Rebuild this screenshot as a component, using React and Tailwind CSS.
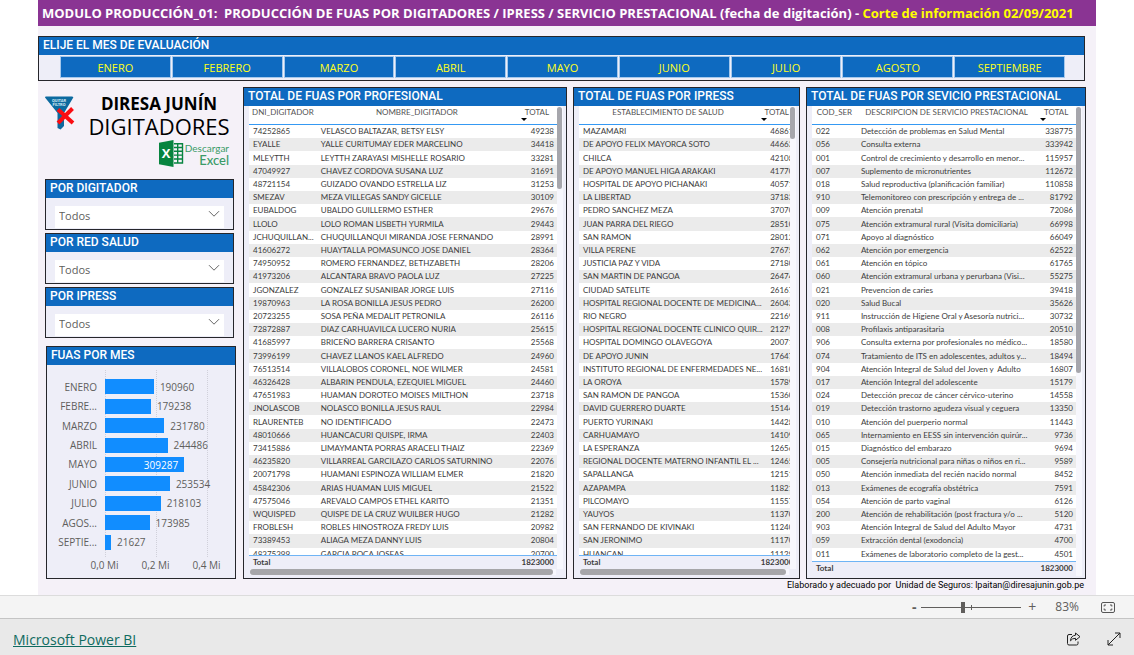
import React, { useState } from 'react'
import clsx from 'clsx'

const months = ['ENERO', 'FEBRERO', 'MARZO', 'ABRIL', 'MAYO', 'JUNIO', 'JULIO', 'AGOSTO', 'SEPTIEMBRE']

const monthTotals = [
  { label: 'ENERO', value: 190960 },
  { label: 'FEBRE...', value: 179238 },
  { label: 'MARZO', value: 231780 },
  { label: 'ABRIL', value: 244486 },
  { label: 'MAYO', value: 309287 },
  { label: 'JUNIO', value: 253534 },
  { label: 'JULIO', value: 218103 },
  { label: 'AGOS...', value: 173985 },
  { label: 'SEPTIE...', value: 21627 },
]

const CHART_MAX = 500000

const professionals = [
  ['74252865', 'VELASCO BALTAZAR, BETSY ELSY', 49238],
  ['EYALLE', 'YALLE CURITUMAY EDER MARCELINO', 34418],
  ['MLEYTTH', 'LEYTTH ZARAYASI MISHELLE ROSARIO', 33281],
  ['47049927', 'CHAVEZ CORDOVA SUSANA LUZ', 31691],
  ['48721154', 'GUIZADO OVANDO ESTRELLA LIZ', 31253],
  ['SMEZAV', 'MEZA VILLEGAS SANDY GICELLE', 30109],
  ['EUBALDOG', 'UBALDO GUILLERMO ESTHER', 29676],
  ['LLOLO', 'LOLO ROMAN LISBETH YURMILA', 29443],
  ['JCHUQUILLAN...', 'CHUQUILLANQUI MIRANDA JOSE FERNANDO', 28991],
  ['41606272', 'HUAYTALLA POMASUNCO JOSE DANIEL', 28364],
  ['74950952', 'ROMERO FERNANDEZ, BETHZABETH', 28206],
  ['41973206', 'ALCANTARA BRAVO PAOLA LUZ', 27225],
  ['JGONZALEZ', 'GONZALEZ SUSANIBAR JORGE LUIS', 27116],
  ['19870963', 'LA ROSA BONILLA JESUS PEDRO', 26200],
  ['20723255', 'SOSA PEÑA MEDALIT PETRONILA', 26116],
  ['72872887', 'DIAZ CARHUAVILCA LUCERO NURIA', 25615],
  ['41685997', 'BRICEÑO BARRERA CRISANTO', 25568],
  ['73996199', 'CHAVEZ LLANOS KAEL ALFREDO', 24960],
  ['76513514', 'VILLALOBOS CORONEL, NOE WILMER', 24581],
  ['46326428', 'ALBARIN PENDULA, EZEQUIEL MIGUEL', 24460],
  ['47651983', 'HUAMAN DOROTEO MOISES MILTHON', 23718],
  ['JNOLASCOB', 'NOLASCO BONILLA JESUS RAUL', 22984],
  ['RLAURENTEB', 'NO IDENTIFICADO', 22473],
  ['48010666', 'HUANCACURI QUISPE, IRMA', 22403],
  ['73415886', 'LIMAYMANTA PORRAS ARACELI THAIZ', 22369],
  ['46235820', 'VILLARREAL GARCILAZO CARLOS SATURNINO', 22076],
  ['20071798', 'HUAMANI ESPINOZA WILLIAM ELMER', 21820],
  ['45842306', 'ARIAS HUAMAN LUIS MIGUEL', 21522],
  ['47575046', 'AREVALO CAMPOS ETHEL KARITO', 21351],
  ['WQUISPED', 'QUISPE DE LA CRUZ WUILBER HUGO', 21282],
  ['FROBLESH', 'ROBLES HINOSTROZA FREDY LUIS', 20982],
  ['73389453', 'ALIAGA MEZA DANNY LUIS', 20804],
  ['48375399', 'GARCIA ROCA JOSEAS', 20700],
]

const facilities = [
  ['MAZAMARI', 46861],
  ['DE APOYO FELIX MAYORCA SOTO', 44663],
  ['CHILCA', 42108],
  ['DE APOYO MANUEL HIGA ARAKAKI', 41770],
  ['HOSPITAL DE APOYO PICHANAKI', 40571],
  ['LA LIBERTAD', 37183],
  ['PEDRO SANCHEZ MEZA', 37070],
  ['JUAN PARRA DEL RIEGO', 28510],
  ['SAN RAMON', 28012],
  ['VILLA PERENE', 27675],
  ['JUSTICIA PAZ Y VIDA', 27180],
  ['SAN MARTIN DE PANGOA', 26474],
  ['CIUDAD SATELITE', 26167],
  ['HOSPITAL REGIONAL DOCENTE DE MEDICINA...', 26043],
  ['RIO NEGRO', 22169],
  ['HOSPITAL REGIONAL DOCENTE CLINICO QUIR...', 21279],
  ['HOSPITAL DOMINGO OLAVEGOYA', 20071],
  ['DE APOYO JUNIN', 17647],
  ['INSTITUTO REGIONAL DE ENFERMEDADES NE...', 16810],
  ['LA OROYA', 15789],
  ['SAN RAMON DE PANGOA', 15360],
  ['DAVID GUERRERO DUARTE', 15144],
  ['PUERTO YURINAKI', 14428],
  ['CARHUAMAYO', 14109],
  ['LA ESPERANZA', 12656],
  ['REGIONAL DOCENTE MATERNO INFANTIL EL ...', 12465],
  ['SAPALLANGA', 12151],
  ['AZAPAMPA', 11821],
  ['PILCOMAYO', 11557],
  ['YAUYOS', 11370],
  ['SAN FERNANDO DE KIVINAKI', 11240],
  ['SAN JERONIMO', 11170],
  ['HUANCAN', 11129],
]

const services = [
  ['022', 'Detección de problemas en Salud Mental', 338775],
  ['056', 'Consulta externa', 333942],
  ['001', 'Control de crecimiento y desarrollo en menor...', 115957],
  ['007', 'Suplemento de micronutrientes', 112672],
  ['018', 'Salud reproductiva (planificación familiar)', 110858],
  ['910', 'Telemonitoreo con prescripción y entrega de ...', 81792],
  ['009', 'Atención prenatal', 72086],
  ['075', 'Atención extramural rural (Visita domiciliaria)', 66998],
  ['071', 'Apoyo al diagnóstico', 66049],
  ['062', 'Atención por emergencia', 62522],
  ['061', 'Atención en tópico', 61765],
  ['060', 'Atención extramural urbana y perurbana (Visi...', 55275],
  ['021', 'Prevencion de caries', 39418],
  ['020', 'Salud Bucal', 35626],
  ['911', 'Instrucción de Higiene Oral y Asesoría nutrici...', 30732],
  ['008', 'Profilaxis antiparasitaria', 20510],
  ['906', 'Consulta externa por profesionales no médico...', 18580],
  ['074', 'Tratamiento de ITS en adolescentes, adultos y...', 18494],
  ['904', 'Atención Integral de Salud del Joven y  Adulto', 16807],
  ['017', 'Atención Integral del adolescente', 15179],
  ['024', 'Detección precoz de cáncer cérvico-uterino', 14558],
  ['019', 'Detección trastorno agudeza visual y ceguera', 13350],
  ['010', 'Atención del puerperio normal', 11443],
  ['065', 'Internamiento en EESS sin intervención quirúr...', 9736],
  ['015', 'Diagnóstico del embarazo', 9694],
  ['005', 'Consejería nutricional para niñas o niños en ri...', 9589],
  ['050', 'Atención inmediata del recién nacido normal', 8452],
  ['013', 'Exámenes de ecografía obstétrica', 7591],
  ['054', 'Atención de parto vaginal', 6126],
  ['200', 'Atención de rehabilitación (post fractura y/o ...', 5120],
  ['903', 'Atención Integral de Salud del Adulto Mayor', 4731],
  ['059', 'Extracción dental (exodoncia)', 4700],
  ['011', 'Exámenes de laboratorio completo de la gest...', 4501],
]

const Panel = ({ title, className, children }) => (
  <section className={clsx('flex flex-col border border-[#26262b] bg-[#eeeef8]', className)}>
    <h2 className="h-[18px] shrink-0 bg-[#0e6ac0] pl-1 font-['Roboto'] text-[12px] font-medium leading-4 text-white whitespace-nowrap">
      {title}
    </h2>
    {children}
  </section>
)

const Slicer = ({ id, title }) => (
  <Panel title={title} className="h-[51px]">
    <div className="relative mx-[9px] mt-1">
      <select
        id={id}
        aria-label={title}
        className="h-[22px] w-full appearance-none bg-white pb-px pl-1 text-[11px] text-[#605e5c] outline-none"
      >
        <option>Todos</option>
      </select>
      <svg className="pointer-events-none absolute right-1 top-1.5 h-3 w-3" viewBox="0 0 12 12" fill="none" stroke="#666">
        <path d="M1 3.2 6 8.2 11 3.2" />
      </svg>
    </div>
  </Panel>
)

const DataTable = ({ columns, rows, widths, wide, hScroll, thumb }) => (
  <>
    <div className="flex pl-[5px] pr-[3px]">
      <div className={clsx('min-w-0 flex-1 overflow-hidden', hScroll ? 'h-[463px]' : 'h-[470px]')}>
        <table
          className={clsx(
            "h-[469px] table-fixed border-separate border-spacing-0 text-[8px] leading-[11px] text-[#3c3c3c] whitespace-pre font-['Lato']",
            wide ? 'w-[103%]' : 'w-full'
          )}
        >
          <colgroup>
            {widths.map((w, i) => (
              <col key={i} className={w} />
            ))}
          </colgroup>
          <thead>
            <tr className="h-[19px] bg-white">
              {columns.map((col, i) => (
                <th key={col} className="relative border-b border-[#3599f3] p-0 pt-px align-top font-normal text-[#555]">
                  {col}
                  {i === columns.length - 1 && (
                    <span className="absolute bottom-[3px] left-1 h-0 w-0 border-x-[3px] border-t-[3px] border-x-transparent border-t-black" />
                  )}
                </th>
              ))}
            </tr>
          </thead>
          <tbody>
            {rows.map((row) => (
              <tr key={row[0]} className="bg-white even:bg-[#ebebeb]">
                {row.map((cell, i) => (
                  <td key={i} className={clsx('p-0 pl-1', i === row.length - 1 && 'pr-[3px] text-right')}>
                    {cell}
                  </td>
                ))}
              </tr>
            ))}
          </tbody>
          <tfoot className="sticky bottom-0">
            <tr className="h-[14px] bg-[#eeeef8] font-bold">
              <td colSpan={columns.length - 1} className="border-t border-[#6fb4f5] p-0 pl-1">Total</td>
              <td className="border-t border-[#6fb4f5] p-0">
                <div className="flex justify-end pr-[3px]">1823000</div>
              </td>
            </tr>
          </tfoot>
        </table>
      </div>
      <div className="w-[6px] shrink-0 bg-[#f7f7fd] pt-px">
        <div className={clsx('w-[5px] rounded-full bg-[#a6a6ac]', thumb)} />
      </div>
    </div>
    {hScroll && (
      <div className="mb-[3px] ml-[6px] mr-[10px] bg-[#f7f7fd] pr-[3px]">
        <div className="h-[6px] rounded-full bg-[#a6a6a9]" />
      </div>
    )}
  </>
)

const Chart = () => (
  <Panel title="FUAS POR MES" className="ml-px mr-px mt-2 flex-1">
    <div className="relative mt-[5px] flex flex-1 flex-col pb-[5px] pt-[7px] text-[10px] text-[#605e5c]">
      <div className="absolute inset-y-0 left-[58px] right-[2px] grid grid-cols-[2fr_2fr_1fr]">
        <i className="border-l border-dotted border-[#d0d0da]" />
        <i className="border-l border-dotted border-[#d0d0da]" />
        <i className="border-l border-dotted border-[#d0d0da]" />
      </div>
      {monthTotals.map((m) => {
        const inside = m.value > 300000
        return (
          <div key={m.label} className="relative flex flex-1 items-center pr-[2px]">
            <span className="w-[50px] shrink-0 text-right leading-none">{m.label}</span>
            <div className="ml-2 flex min-w-0 flex-1 items-center">
              <div
                className="h-[15px] shrink-0 bg-[#118dff] pr-1.5 text-right leading-4 text-white"
                style={{ width: `${(m.value / CHART_MAX) * 100}%` }}
              >
                {inside && m.value}
              </div>
              {!inside && <span className="pl-1.5 leading-none">{m.value}</span>}
            </div>
          </div>
        )
      })}
    </div>
    <div className="mb-[5px] ml-[32px] flex text-[10px] leading-4 text-[#605e5c]">
      <span className="w-[51px] text-center">0,0 Mi</span>
      <span className="w-[51px] text-center">0,2 Mi</span>
      <span className="w-[51px] text-center">0,4 Mi</span>
    </div>
  </Panel>
)

const FunnelIcon = () => (
  <svg className="h-[34px] w-[32px]" viewBox="0 0 32 34">
    <path d="M0 1.5Q0 .5 1 .5H27Q29 .5 28 2L19 17V30L15.500 33.500L12.500 32V17Z" fill="#0c6a9f" />
    <text x="14" y="5.500" fontSize="4" fontWeight="700" textAnchor="middle" fill="#d5eaf5" fontFamily="Roboto">QUITAR</text>
    <text x="14" y="9.500" fontSize="4" fontWeight="700" textAnchor="middle" fill="#d5eaf5" fontFamily="Roboto">FILTRO</text>
    <path d="M13 13.500 28 27M27.500 12.500 13 27" stroke="#fb0d12" strokeWidth="4" />
  </svg>
)

const ExcelIcon = () => (
  <svg className="h-[27px] w-[26px]" viewBox="0 0 26 27">
    <path d="M0 2.800 14.500 0V27L0 24.200Z" fill="#07843f" />
    <path d="M15 3.700H23.500V23H15M15 7.500H23M15 11.300H23M15 15.100H23M15 19H23M18.700 4V23" fill="none" stroke="#07843f" strokeWidth="1.400" />
    <text x="7" y="18" fontSize="13" fontWeight="700" textAnchor="middle" fill="#fff" fontFamily="Open Sans">X</text>
  </svg>
)

const StatusBar = () => {
  const [zoom, setZoom] = useState(41)

  return (
    <div className="flex h-6 items-center justify-end border-y border-t-[#dcdcdc] border-b-[#c4c4c4] bg-[#f4f4f4] pr-[19px] text-[#605e5c]">
      <button aria-label="Alejar" className="w-[10px] text-[14px] font-bold leading-none">-</button>
      <div className="relative mx-[2px] flex w-[100px] items-center">
        <input
          type="range"
          aria-label="Zoom"
          value={zoom}
          onChange={(e) => setZoom(Number(e.target.value))}
          className="h-3 w-full appearance-none bg-[linear-gradient(#605e5c,#605e5c)] bg-[length:100%_1px] bg-center bg-no-repeat [&::-webkit-slider-thumb]:h-[11px] [&::-webkit-slider-thumb]:w-1 [&::-webkit-slider-thumb]:appearance-none [&::-webkit-slider-thumb]:bg-[#605e5c]"
        />
        <span className="absolute left-1/2 h-[5px] w-px bg-[#605e5c]" />
      </div>
      <button aria-label="Acercar" className="ml-1 w-[10px] text-[14px] leading-none">+</button>
      <span className="ml-[18px] text-[12px] leading-none">83%</span>
      <button aria-label="Ajustar a la página" className="ml-[22px]">
        <svg className="h-[11px] w-[14px]" viewBox="0 0 14 11" fill="none" stroke="#555">
          <rect x=".5" y=".5" width="13" height="10" rx="1.500" />
          <path d="M5 3H3.200V4.500M9 3h1.800V4.500M5 8H3.200V6.500M9 8h1.800V6.500" />
        </svg>
      </button>
    </div>
  )
}

const Footer = () => (
  <footer className="flex h-[36px] items-center bg-[#e9e9e9] pl-[13px] pr-[13px] pt-1">
    <div className="flex-1">
      <a href="#" className="text-[14px] leading-4 text-[#0f6b60] underline">Microsoft Power BI</a>
    </div>
    <button aria-label="Compartir">
      <svg className="h-[14px] w-[14px]" viewBox="0 0 14 14" fill="none" stroke="#222">
        <path d="M5 2.500H2Q.5 2.500 .5 4V11.500Q.5 13 2 13H9.500Q11 13 11 11.500V9.500" />
        <path d="M8.500 1 13 4.700 8.500 8.300V6.300Q5 6.200 3.500 8.800 3.800 3.700 8.500 3.200Z" strokeLinejoin="round" />
      </svg>
    </button>
    <button aria-label="Pantalla completa" className="ml-[26px]">
      <svg className="h-[14px] w-[14px]" viewBox="0 0 14 14" fill="none" stroke="#222">
        <path d="M1 13 13 1M8 1H13V6M1 8V13H6" />
      </svg>
    </button>
  </footer>
)

export default function App() {
  return (
    <div className="bg-white font-['Open_Sans',sans-serif]">
      <main className="mx-[38px] bg-[#f5f1f8] pb-1">
        <h1 className="h-[26px] bg-[#8a3493] pl-1 text-[13px] font-bold leading-[26px] text-white whitespace-pre">
          {'MODULO PRODUCCIÓN_01:  PRODUCCIÓN DE FUAS POR DIGITADORES / IPRESS / SERVICIO PRESTACIONAL (fecha de digitación) - '}
          <span className="text-[#ffff00]">Corte de información 02/09/2021</span>
        </h1>

        <Panel title="ELIJE EL MES DE EVALUACIÓN" className="mr-[11px] mt-[10px] h-[45px]">
          <div className="ml-[21px] mr-[19px] mt-px flex gap-px">
            {months.map((m) => (
              <button key={m} className="h-[22px] flex-1 border border-[#a5c8ec] bg-[#0e6ac0] text-[11px] leading-none text-[#ffff1a]">
                {m}
              </button>
            ))}
          </div>
        </Panel>

        <div className="ml-[7px] mr-[10px] mt-[6px] grid grid-cols-[192fr_324fr_227fr_280fr] gap-[6px]">
          <div className="flex flex-col">
            <div className="flex h-[92px] pt-[9px]">
              <button aria-label="Quitar filtro" className="mr-2 self-start">
                <FunnelIcon />
              </button>
              <div className="flex-1 pr-1 text-center text-black">
                <p className="text-[17px] font-bold leading-4">DIRESA JUNÍN</p>
                <p className="text-[22px] leading-7">DIGITADORES</p>
                <button className="ml-auto mr-1 flex items-center text-right text-[#3a9b67]">
                  <ExcelIcon />
                  <span className="font-['Lato'] text-[10px] leading-3">
                    Descargar
                    <b className="block text-[13px] font-medium leading-3">Excel</b>
                  </span>
                </button>
              </div>
            </div>
            <div className="mr-[3px] flex flex-col gap-[3px]">
              <Slicer id="digitador" title="POR DIGITADOR" />
              <Slicer id="red" title="POR RED SALUD" />
              <Slicer id="ipress" title="POR IPRESS" />
            </div>
            <Chart />
          </div>

          <Panel title="TOTAL DE FUAS POR PROFESIONAL">
            <DataTable
              columns={['DNI_DIGITADOR', 'NOMBRE_DIGITADOR', 'TOTAL']}
              widths={['w-[22%]', 'w-[65%]', 'w-[13%]']}
              rows={professionals}
              thumb="h-[82px]"
              hScroll
            />
          </Panel>
          <Panel title="TOTAL DE FUAS POR IPRESS">
            <DataTable
              columns={['ESTABLECIMIENTO DE SALUD', 'TOTAL']}
              widths={['w-[82%]', 'w-[18%]']}
              rows={facilities}
              thumb="h-[32px]"
              wide
              hScroll
            />
          </Panel>
          <Panel title="TOTAL DE FUAS POR SEVICIO PRESTACIONAL">
            <DataTable
              columns={['COD_SER', 'DESCRIPCION DE SERVICIO PRESTACIONAL', 'TOTAL']}
              widths={['w-[17%]', 'w-[68%]', 'w-[15%]']}
              rows={services}
              thumb="h-[266px]"
            />
          </Panel>
        </div>
        <p className="mr-[12px] text-right font-['Roboto'] text-[9px] leading-3 text-black whitespace-pre">
          {'Elaborado y adecuado por  Unidad de Seguros: lpaitan@diresajunin.gob.pe'}
        </p>
      </main>
      <StatusBar />
      <Footer />
    </div>
  )
}
